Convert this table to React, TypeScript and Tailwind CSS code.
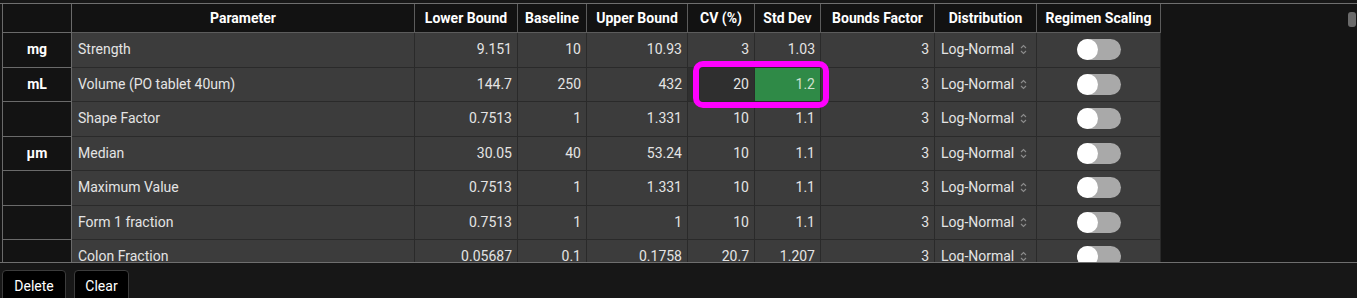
import React from "react";

type Row = {
  unit: string;
  name: string;
  lower: string;
  base: string;
  upper: string;
  cv: string;
  sd: string;
  factor: string;
};

const rows: Row[] = [
  { unit: "mg", name: "Strength", lower: "9.151", base: "10", upper: "10.93", cv: "3", sd: "1.03", factor: "3" },
  { unit: "mL", name: "Volume (PO tablet 40um)", lower: "144.7", base: "250", upper: "432", cv: "20", sd: "1.2", factor: "3" },
  { unit: "", name: "Shape Factor", lower: "0.7513", base: "1", upper: "1.331", cv: "10", sd: "1.1", factor: "3" },
  { unit: "µm", name: "Median", lower: "30.05", base: "40", upper: "53.24", cv: "10", sd: "1.1", factor: "3" },
  { unit: "", name: "Maximum Value", lower: "0.7513", base: "1", upper: "1.331", cv: "10", sd: "1.1", factor: "3" },
  { unit: "", name: "Form 1 fraction", lower: "0.7513", base: "1", upper: "1", cv: "10", sd: "1.1", factor: "3" },
  { unit: "", name: "Colon Fraction", lower: "0.05687", base: "0.1", upper: "0.1758", cv: "20.7", sd: "1.207", factor: "3" },
];

const headers = [
  "Parameter",
  "Lower Bound",
  "Baseline",
  "Upper Bound",
  "CV (%)",
  "Std Dev",
  "Bounds Factor",
  "Distribution",
  "Regimen Scaling",
];

const cols = "grid grid-cols-[70px_343px_103px_69px_101px_67px_66px_114px_102px_124px]";

function Toggle() {
  return (
    <div className="relative h-[21px] w-[44px] rounded-full bg-[#a9a9a9]">
      <div className="absolute left-0 top-0 h-[21px] w-[21px] rounded-full bg-white" />
    </div>
  );
}

function Carets() {
  return (
    <svg width="7" height="11" viewBox="0 0 7 11" className="text-[#8c8c8c]">
      <path d="M1 4 L3.5 1.5 L6 4" fill="none" stroke="currentColor" strokeWidth="1.1" />
      <path d="M1 7 L3.5 9.5 L6 7" fill="none" stroke="currentColor" strokeWidth="1.1" />
    </svg>
  );
}

const num = "flex items-center justify-end border-r border-b border-[#2a2a2a] bg-[#3c3c3c] pr-[5px]";

export default function App() {
  return (
    <div
      className="relative h-[298px] w-[1357px] overflow-hidden bg-[#171717] text-[14px] text-[#e4e4e4]"
      style={{ fontFamily: "Roboto, 'Liberation Sans', sans-serif" }}
    >
      <div className="mt-[3px] h-[260px] overflow-hidden border-y border-[#6f6f6f] bg-[#141414] pl-[2px]">
        <div className={`${cols} h-[29px]`}>
          <div className="border-x border-b border-[#6a6a6a] bg-[#121212]" />
          {headers.map((h) => (
            <div
              key={h}
              className="flex items-center justify-center border-r border-b border-[#5c5c5c] bg-[#121212] font-bold text-white first:border-l"
            >
              {h}
            </div>
          ))}
        </div>
        {rows.map((r, i) => {
          const hl = i === 1;
          return (
            <div key={r.name} className={`${cols} h-[34.5px]`}>
              <div className="flex items-center justify-center border-x border-b border-[#6a6a6a] bg-[#131313] font-bold text-white">
                {r.unit}
              </div>
              <div className="flex items-center border-r border-b border-[#2a2a2a] bg-[#3c3c3c] pl-[6px]">{r.name}</div>
              <div className={num}>{r.lower}</div>
              <div className={num}>{r.base}</div>
              <div className={num}>{r.upper}</div>
              <div className={hl ? `${num} !bg-[#2f2f2f]` : num}>{r.cv}</div>
              <div className={hl ? `${num} !bg-[#2f8a47] text-[#cfe0cf]` : num}>{r.sd}</div>
              <div className={num}>{r.factor}</div>
              <div className="flex items-center justify-between border-r border-b border-[#2a2a2a] bg-[#3c3c3c] pl-[6px] pr-[9px]">
                <span>Log-Normal</span>
                <Carets />
              </div>
              <div className="flex items-center justify-center border-r border-b border-[#2a2a2a] bg-[#3c3c3c]">
                <Toggle />
              </div>
            </div>
          );
        })}
      </div>

      <div className="mt-[7px] flex gap-[8px] pl-[2px]">
        <button className="h-[32px] w-[64px] rounded-t-[4px] border border-[#3c3c3c] bg-black pt-[1px] text-white">
          Delete
        </button>
        <button className="h-[32px] w-[55px] rounded-t-[4px] border border-[#3c3c3c] bg-black pt-[1px] text-white">
          Clear
        </button>
      </div>

      <div className="absolute left-[693px] top-[61px] h-[47px] w-[136px] rounded-[10px] border-[6px] border-[#ff00ff]" />
      <div className="absolute left-[1348px] top-[12px] h-[15px] w-[8px] rounded-[3px] bg-[#6b6b6b]" />
    </div>
  );
}
